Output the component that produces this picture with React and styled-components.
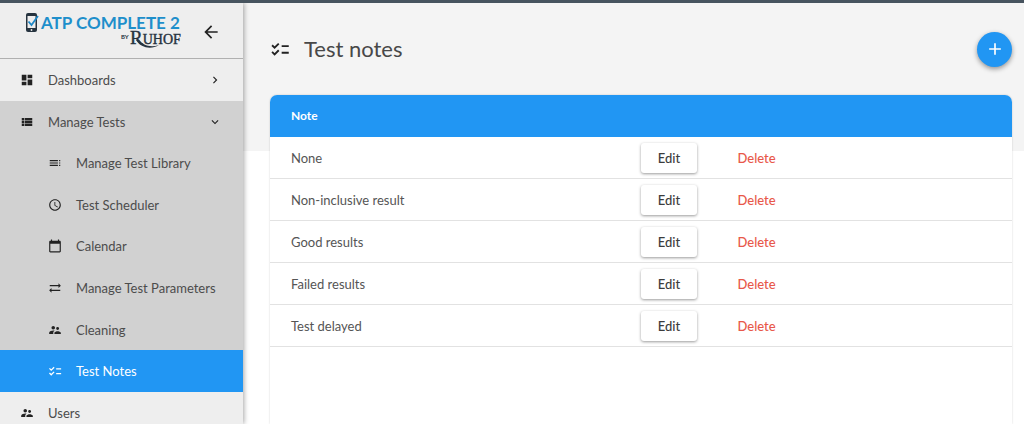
import React from "react";
import styled, { createGlobalStyle } from "styled-components";
import {
  MdAccessTime,
  MdAdd,
  MdArrowBack,
  MdCalendarToday,
  MdDashboard,
  MdKeyboardArrowDown,
  MdKeyboardArrowRight,
  MdSupervisorAccount,
  MdSyncAlt,
  MdToc,
  MdViewList,
} from "react-icons/md";

const GlobalStyle = createGlobalStyle`
  * {
    box-sizing: border-box;
  }

  body {
    margin: 0;
    background: #fff;
    color: #555;
    font-family: "Lato", "Liberation Sans", sans-serif;
    font-size: 13px;
  }

  button {
    font-family: inherit;
    cursor: pointer;
  }
`;

const Page = styled.div`
  display: flex;
  height: 100vh;
  overflow: hidden;
  border-top: 3px solid #47545f;
`;

const Sidebar = styled.aside`
  flex: none;
  width: 243px;
  background: #eee;
  box-shadow: 1px 0 5px rgba(0, 0, 0, 0.35);
  z-index: 1;
`;

const SidebarHeader = styled.div`
  display: flex;
  align-items: center;
  justify-content: space-between;
  height: 56px;
  padding: 2px 22px 0 24px;
  border-bottom: 1px solid #b0b0b0;
`;

const BackButton = styled.button`
  display: flex;
  padding: 0;
  border: 0;
  background: none;
  color: #222;
  font-size: 20px;
`;

const NavGroup = styled.div`
  display: grid;
  grid-auto-rows: 1fr;
  min-height: 291px;
  background: #d1d1d1;
`;

const NavLink = styled.a`
  display: flex;
  align-items: center;
  gap: 14px;
  min-height: ${(props) => (props.$top ? "42px" : "41px")};
  padding: 0 21px 0 ${(props) => (props.$nested ? "48px" : "20px")};
  background: ${(props) => (props.$active ? "#2196f3" : "transparent")};
  color: ${(props) => (props.$active ? "#fff" : "#4c4c4c")};
  text-decoration: none;

  svg {
    flex: none;
    width: 14px;
    height: 14px;
    color: ${(props) => (props.$active ? "#fff" : "#222")};
  }

  span {
    flex: 1;
  }
`;

const Main = styled.main`
  flex: 1;
  min-width: 0;
  display: flex;
  flex-direction: column;
  padding: 0 12px 0 27px;
  background: linear-gradient(#f4f4f4 148px, #fff 148px);
`;

const TitleBar = styled.header`
  display: flex;
  align-items: center;
  gap: 14px;
  height: 92px;

  svg {
    width: 20px;
    height: 20px;
    color: #222;
  }
`;

const Title = styled.h1`
  flex: 1;
  margin: 0;
  padding-bottom: 2px;
  color: #484848;
  font-size: 22px;
  font-weight: 400;
`;

const AddButton = styled.button`
  display: flex;
  align-items: center;
  justify-content: center;
  width: 35px;
  height: 35px;
  padding: 0;
  border: 0;
  border-radius: 50%;
  background: #2196f3;
  box-shadow: 0 2px 5px rgba(0, 0, 0, 0.4);

  svg {
    color: #fff;
  }
`;

const Card = styled.section`
  flex: 1;
  border-radius: 7px 7px 0 0;
  background: #fff;
  box-shadow: 0 0 2px rgba(0, 0, 0, 0.2);
  overflow: hidden;
`;

const Table = styled.table`
  width: 100%;
  border-collapse: separate;
  border-spacing: 0;
  table-layout: fixed;

  th {
    height: 42px;
    padding: 0 21px 2px;
    background: #2196f3;
    color: #fff;
    font-size: 12px;
    font-weight: 700;
    text-align: left;
  }

  td {
    height: 42px;
    padding: 0;
    border-bottom: 1px solid #e2e2e2;
  }

  td:first-child {
    padding-left: 21px;
  }
`;

const NameColumn = styled.col`
  width: 50%;
`;

const EditColumn = styled.col`
  width: 13%;
`;

const EditButton = styled.button`
  display: block;
  width: 56px;
  height: 30px;
  padding: 0;
  border: 0;
  border-radius: 3px;
  background: #fff;
  box-shadow: 0 1px 3px rgba(0, 0, 0, 0.4);
  color: #3c3c3c;
  font-size: 13px;
  font-weight: 500;
`;

const DeleteButton = styled.button`
  display: block;
  padding: 0;
  border: 0;
  background: none;
  color: #e8584a;
  font-size: 13px;
  font-weight: 500;
`;

const Logo = () => (
  <svg width="160" height="40" viewBox="0 0 160 40" role="img" aria-label="ATP Complete 2 by Ruhof">
    <rect x="2" y="1" width="11" height="19" rx="2" fill="#26333f" />
    <rect x="3.500" y="4" width="8" height="12" fill="#eee" />
    <path d="M4.500 9.500l3 3.500L14 4" fill="none" stroke="#1e88c7" strokeWidth="1.800" />
    <circle cx="7.500" cy="18" r="0.900" fill="#eee" />
    <text x="17" y="17" fontFamily="Lato" fontWeight="700" fontSize="17" fill="#1e8fcb">
      ATP COMPLETE 2
    </text>
    <text x="97" y="27" fontFamily="Lato" fontWeight="700" fontSize="6" fill="#26333f">
      BY
    </text>
    <text x="106" y="32" fontFamily="Liberation Serif" fontSize="19" fill="#26333f" stroke="#26333f" strokeWidth="0.400">
      R<tspan fontSize="14">UHOF</tspan>
    </text>
    <path d="M115 28c4 5 11 8 20 5c-8 5 -18 3 -23 -5z" fill="#26333f" />
  </svg>
);

const ChecklistIcon = () => (
  <svg viewBox="0 0 24 24" fill="none" stroke="currentColor" strokeWidth="2.200">
    <path d="M2.500 7.500l3 3 5-5M2.500 15.500l3 3 5-5M14 8.500h8.500M14 16.500h8.500" />
  </svg>
);

const testLinks = [
  { label: "Manage Test Library", icon: MdToc },
  { label: "Test Scheduler", icon: MdAccessTime },
  { label: "Calendar", icon: MdCalendarToday },
  { label: "Manage Test Parameters", icon: MdSyncAlt },
  { label: "Cleaning", icon: MdSupervisorAccount },
  { label: "Test Notes", icon: ChecklistIcon, active: true },
];

const notes = [
  "None",
  "Non-inclusive result",
  "Good results",
  "Failed results",
  "Test delayed",
];

const App = () => {
  return (
    <>
      <GlobalStyle />
      <Page>
        <Sidebar>
          <SidebarHeader>
            <Logo />
            <BackButton aria-label="Collapse menu">
              <MdArrowBack />
            </BackButton>
          </SidebarHeader>
          <nav>
            <NavLink href="#dashboards" $top>
              <MdDashboard />
              <span>Dashboards</span>
              <MdKeyboardArrowRight />
            </NavLink>
            <NavGroup>
              <NavLink href="#tests">
                <MdViewList />
                <span>Manage Tests</span>
                <MdKeyboardArrowDown />
              </NavLink>
              {testLinks.map(({ label, icon: Icon, active }) => (
                <NavLink key={label} href="#tests" $nested $active={active}>
                  <Icon />
                  <span>{label}</span>
                </NavLink>
              ))}
            </NavGroup>
            <NavLink href="#users" $top>
              <MdSupervisorAccount />
              <span>Users</span>
            </NavLink>
          </nav>
        </Sidebar>
        <Main>
          <TitleBar>
            <ChecklistIcon />
            <Title>Test notes</Title>
            <AddButton aria-label="Add note">
              <MdAdd />
            </AddButton>
          </TitleBar>
          <Card>
            <Table>
              <colgroup>
                <NameColumn />
                <EditColumn />
                <col />
              </colgroup>
              <thead>
                <tr>
                  <th colSpan={3}>Note</th>
                </tr>
              </thead>
              <tbody>
                {notes.map((note) => (
                  <tr key={note}>
                    <td>{note}</td>
                    <td>
                      <EditButton>Edit</EditButton>
                    </td>
                    <td>
                      <DeleteButton>Delete</DeleteButton>
                    </td>
                  </tr>
                ))}
              </tbody>
            </Table>
          </Card>
        </Main>
      </Page>
    </>
  );
};

export default App;
